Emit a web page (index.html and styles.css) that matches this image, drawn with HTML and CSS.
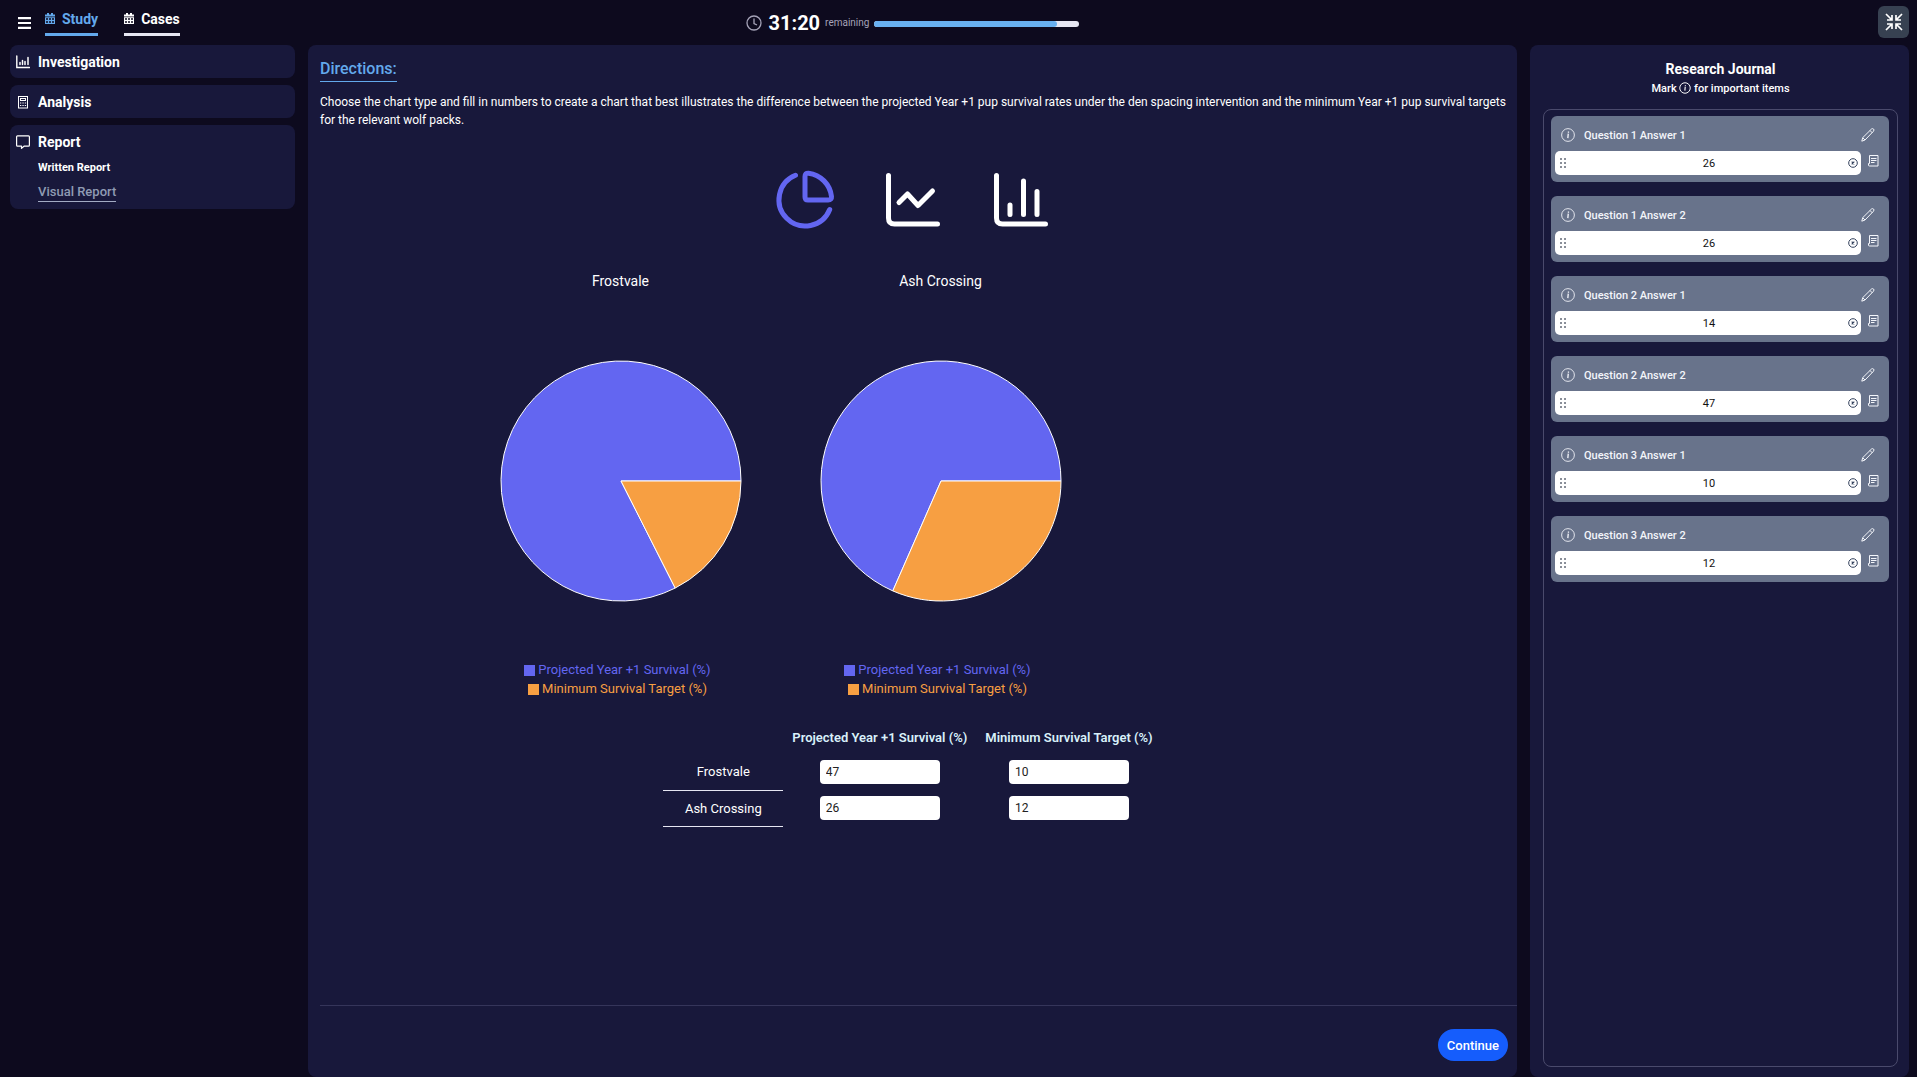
FILE: index.html
```html
<!DOCTYPE html>
<html lang="en">
<head>
  <meta charset="UTF-8">
  <meta name="viewport" content="width=device-width, initial-scale=1.0">
  <title>Visual Report</title>
  <link rel="stylesheet" href="styles.css">
</head>
<body>
  <header class="topbar">
    <nav class="tabs">
      <button class="menu-button" aria-label="Menu">
        <svg width="13" height="12" viewBox="0 0 13 12"><path d="M0 1.200h13M0 6h13M0 10.800h13" stroke="currentColor" stroke-width="2.200"/></svg>
      </button>
      <a class="tab active" href="#study">
        <svg class="tab-icon" viewBox="0 0 10 11" fill="currentColor"><path d="M2 0h2v1.500h2V0h2v1.500h2v2H0v-2h2zM0 4.200h10V11H0zM1 5.200v1.600h2V5.200zM4 5.200v1.600h2V5.200zM7 5.200v1.600h2V5.200zM1 8.200v1.600h2V8.200zM4 8.200v1.600h2V8.200zM7 8.200v1.600h2V8.200z" fill-rule="evenodd"/></svg>
        Study
      </a>
      <a class="tab" href="#cases">
        <svg class="tab-icon" viewBox="0 0 10 11" fill="currentColor"><path d="M2 0h2v1.500h2V0h2v1.500h2v2H0v-2h2zM0 4.200h10V11H0zM1 5.200v1.600h2V5.200zM4 5.200v1.600h2V5.200zM7 5.200v1.600h2V5.200zM1 8.200v1.600h2V8.200zM4 8.200v1.600h2V8.200zM7 8.200v1.600h2V8.200z" fill-rule="evenodd"/></svg>
        Cases
      </a>
    </nav>
    <div class="timer">
      <svg class="clock" viewBox="0 0 16 16" fill="none" stroke="currentColor" stroke-width="1.300"><circle cx="8" cy="8" r="7"/><path d="M8 3.500v5l3 1.500"/></svg>
      <span class="time">31:20</span>
      <span class="remaining">remaining</span>
      <div class="progress"><div class="progress-fill" style="width: 89%"></div></div>
    </div>
    <button class="shrink-button" aria-label="Exit full screen">
      <svg width="18" height="18" viewBox="0 0 18 18" fill="none" stroke="currentColor" stroke-width="1.700"><path d="M1 1l5.500 5.500M7 2v5H2M17 1l-5.500 5.500M11 2v5h5M1 17l5.500-5.500M2 11h5v5M17 17l-5.500-5.500M16 11h-5v5"/></svg>
    </button>
  </header>

  <div class="layout">
    <aside class="sidebar">
      <section class="side-card">
        <a class="side-title" href="#investigation">
          <svg class="side-icon" viewBox="0 0 14 14" fill="none" stroke="currentColor" stroke-linecap="round"><path d="M.8 1v11.500h12.600" stroke-width="1.400"/><path d="M4 9.500V7.500M6.500 9.500v-4M9 9.500V6.500M12 9.500v-7" stroke-width="1.500"/></svg>
          Investigation
        </a>
      </section>
      <section class="side-card">
        <a class="side-title" href="#analysis">
          <svg class="side-icon" viewBox="0 0 14 14" fill="none" stroke="currentColor"><rect x="2.500" y="1.500" width="9" height="11.500"/><rect x="4.500" y="3.500" width="5" height="2"/><path d="M4 8h1.300M6.400 8h1.300M8.800 8h1.300M4 10.500h1.300M6.400 10.500h1.300M8.800 10.500h1.300" stroke-width="1.200"/></svg>
          Analysis
        </a>
      </section>
      <section class="side-card">
        <a class="side-title" href="#report">
          <svg class="side-icon" viewBox="0 0 14 14" fill="none" stroke="currentColor" stroke-width="1.200" stroke-linejoin="round"><path d="M1.500.8h11q.9 0 .9.900v8.600q0 .9-.9.900H8l-2.500 2.200v-2.200h-4q-.9 0-.9-.9V1.700q0-.9.900-.9z"/></svg>
          Report
        </a>
        <div class="side-links">
          <a class="side-link" href="#written">Written Report</a>
          <a class="side-link current" href="#visual">Visual Report</a>
        </div>
      </section>
    </aside>

    <main class="content">
      <div class="content-body">
        <h1 class="directions">Directions:</h1>
        <p class="directions-text">Choose the chart type and fill in numbers to create a chart that best illustrates the difference between the projected Year +1 pup survival rates under the den spacing intervention and the minimum Year +1 pup survival targets for the relevant wolf packs.</p>

        <div class="chart-types">
          <button class="chart-type selected" aria-label="Pie chart">
            <svg viewBox="0 0 64 64"><path d="M22.500 7.300A26.300 26.300 0 1 0 56.700 41.500M32 8.500q0-3.500 3.500-3.300A26.500 26.500 0 0 1 58.500 28.500q.3 3.500-3.300 3.500H35q-3 0-3-3z"/></svg>
          </button>
          <button class="chart-type" aria-label="Line chart">
            <svg viewBox="0 0 64 64"><path d="M7.500 7.500V50q0 6 6 6H56.500M18 34.500l8.500-8.500 10.500 11.500 14.500-14.500"/></svg>
          </button>
          <button class="chart-type" aria-label="Bar chart">
            <svg viewBox="0 0 64 64"><path d="M7.500 7.500V50q0 6 6 6H56.500M21 37v9.500M34.500 13v33.500M48 23.500v23"/></svg>
          </button>
        </div>

        <div class="charts" id="charts"></div>

        <table class="data-table">
          <thead>
            <tr>
              <td></td>
              <th scope="col">Projected Year +1 Survival (%)</th>
              <th scope="col">Minimum Survival Target (%)</th>
            </tr>
          </thead>
          <tbody>
            <tr>
              <th class="row-label" scope="row">Frostvale</th>
              <td><input type="text" value="47" id="projected-0" aria-label="Frostvale projected survival"></td>
              <td><input type="text" value="10" id="target-0" aria-label="Frostvale survival target"></td>
            </tr>
            <tr>
              <th class="row-label" scope="row">Ash Crossing</th>
              <td><input type="text" value="26" id="projected-1" aria-label="Ash Crossing projected survival"></td>
              <td><input type="text" value="12" id="target-1" aria-label="Ash Crossing survival target"></td>
            </tr>
          </tbody>
        </table>
      </div>
      <footer class="content-footer">
        <button class="continue-button">Continue</button>
      </footer>
    </main>

    <aside class="journal">
      <h2>Research Journal</h2>
      <p class="journal-hint">Mark <svg width="12" height="12" viewBox="0 0 16 16" fill="none" stroke="currentColor" stroke-width="1.300"><circle cx="8" cy="8" r="7"/><path d="M8.300 6.500L7.800 11.500M8.500 4.200v1.300" stroke-width="1.500"/></svg> for important items</p>
      <div class="journal-list" id="journal-list"></div>
    </aside>
  </div>

  <script>
    const packs = ['Frostvale', 'Ash Crossing'];
    const entries = [
      { title: 'Question 1 Answer 1', value: 26 },
      { title: 'Question 1 Answer 2', value: 26 },
      { title: 'Question 2 Answer 1', value: 14 },
      { title: 'Question 2 Answer 2', value: 47 },
      { title: 'Question 3 Answer 1', value: 10 },
      { title: 'Question 3 Answer 2', value: 12 },
    ];

    // projected slice runs counter-clockwise from 3 o'clock, the target fills the rest
    function pieSlices(projected, target) {
      const r = 120;
      const angle = target / (projected + target) * 2 * Math.PI;
      const x = 121 + r * Math.cos(angle);
      const y = 121 + r * Math.sin(angle);
      const large = angle > Math.PI ? 1 : 0;
      return `
        <path class="slice-projected" d="M121 121L241 121A${r} ${r} 0 ${1 - large} 0 ${x} ${y}Z"/>
        <path class="slice-target" d="M121 121L241 121A${r} ${r} 0 ${large} 1 ${x} ${y}Z"/>
      `;
    }

    function renderCharts() {
      document.getElementById('charts').innerHTML = packs.map((name, i) => {
        const projected = Number(document.getElementById('projected-' + i).value) || 0;
        const target = Number(document.getElementById('target-' + i).value) || 0;
        return `
          <div class="chart">
            <h3>${name}</h3>
            <svg class="pie" viewBox="0 0 242 242">${projected + target ? pieSlices(projected, target) : ''}</svg>
            <ul class="legend">
              <li class="projected">Projected Year +1 Survival (%)</li>
              <li class="target">Minimum Survival Target (%)</li>
            </ul>
          </div>
        `;
      }).join('');
    }

    function renderJournal() {
      document.getElementById('journal-list').innerHTML = entries.map((e, i) => `
        <div class="entry">
          <div class="entry-head">
            <button class="icon-button" aria-label="Mark as important">
              <svg width="14" height="14" viewBox="0 0 16 16" fill="none" stroke="currentColor"><circle cx="8" cy="8" r="7.300"/><path d="M8.300 6.500L7.800 11.500M8.500 4v1.500" stroke-width="1.500"/></svg>
            </button>
            <label for="entry-${i}">${e.title}</label>
            <button class="icon-button" aria-label="Edit">
              <svg width="14" height="14" viewBox="0 0 14 14" fill="none" stroke="currentColor" stroke-linejoin="round"><path d="M.8 13.200l.9-3.500L10.500 1q1-.8 2 0t0 2.200L4 12zM9 2.500l2.400 2.400M1.700 9.700L4 12"/></svg>
            </button>
          </div>
          <div class="entry-row">
            <div class="entry-value">
              <svg class="grip" width="6" height="10" viewBox="0 0 6 10" fill="currentColor"><path d="M0 0h2v2H0zM4 0h2v2H4zM0 4h2v2H0zM4 4h2v2H4zM0 8h2v2H0zM4 8h2v2H4z"/></svg>
              <input type="text" id="entry-${i}" value="${e.value}">
              <button class="icon-button clear" aria-label="Clear">
                <svg width="10" height="10" viewBox="0 0 10 10" fill="none" stroke="currentColor"><circle cx="5" cy="5" r="4.300"/><path d="M3.700 3.700l2.600 2.600M6.300 3.700l-2.600 2.600" stroke-width="1.200"/></svg>
              </button>
            </div>
            <button class="icon-button note" aria-label="Notes">
              <svg width="11" height="12" viewBox="0 0 11 12" fill="none" stroke="currentColor"><path d="M1.500.5h8.500v10.500H1.500q-1 0-1-1V8.500h1V.5M3 3.500h5.500M3 5.500h5.500M3 7.500h3.500"/></svg>
            </button>
          </div>
        </div>
      `).join('');
    }

    document.querySelector('.data-table').addEventListener('input', renderCharts);
    window.onload = () => {
      renderCharts();
      renderJournal();
    };
  </script>
</body>
</html>
```
FILE: styles.css
```css
* {
  box-sizing: border-box;
}
body {
  margin: 0;
  height: 100vh;
  display: flex;
  flex-direction: column;
  background: #0d0a1e;
  color: #fff;
  font-family: Roboto, "Liberation Sans", sans-serif;
  font-size: 13px;
}
h1, h2, h3, p, ul {
  margin: 0;
  padding: 0;
}
a {
  color: inherit;
  text-decoration: none;
}
button {
  border: none;
  padding: 0;
  background: none;
  color: inherit;
  font-family: inherit;
  cursor: pointer;
}
input {
  font-family: inherit;
  border: none;
  min-width: 0;
}
svg {
  flex-shrink: 0;
}

/* header and page share the same columns */
.topbar, .layout {
  display: grid;
  grid-template-columns: 285px 1fr 379px;
  gap: 13px;
  padding: 0 8px 0 10px;
}
.topbar {
  height: 45px;
  flex-shrink: 0;
}
.layout {
  flex: 1;
  min-height: 0;
}
.tabs {
  display: flex;
  align-items: flex-start;
  padding: 8px 0 0 8px;
}
.menu-button {
  height: 28px;
  padding-top: 1px;
  margin-right: 14px;
}
.menu-button svg {
  display: block;
}
.tab {
  display: flex;
  align-items: center;
  gap: 7px;
  height: 28px;
  padding-bottom: 4px;
  margin-right: 26px;
  border-bottom: 3px solid #e6e6f2;
  font-size: 14px;
  font-weight: 700;
}
.tab.active {
  color: #63a9ec;
  border-color: #63a9ec;
}
.tab-icon {
  width: 10px;
  height: 11px;
}
.timer {
  display: flex;
  align-items: center;
  justify-content: center;
}
.clock {
  width: 16px;
  height: 16px;
  margin-right: 7px;
  color: #a5a3b8;
}
.time {
  margin-right: 5px;
  font-size: 20px;
  font-weight: 700;
}
.remaining {
  margin-right: 5px;
  color: #a5a3b8;
  font-size: 10px;
}
.progress {
  width: 205px;
  height: 6px;
  margin-top: 2px;
  border-radius: 3px;
  background: #e6e6f2;
}
.progress-fill {
  height: 100%;
  border-radius: 3px;
  background: #68b0f0;
}
.shrink-button {
  justify-self: end;
  display: grid;
  place-items: center;
  width: 31px;
  height: 32px;
  margin-top: 6px;
  border-radius: 6px;
  background: #374151;
}

.sidebar {
  display: flex;
  flex-direction: column;
  gap: 7px;
}
.side-card {
  padding: 0 6px;
  border-radius: 8px;
  background: #18183b;
}
.side-title {
  display: flex;
  align-items: center;
  gap: 8px;
  height: 33px;
  font-size: 14px;
  font-weight: 700;
}
.side-icon {
  width: 14px;
  height: 14px;
}
.side-links {
  display: flex;
  flex-direction: column;
  align-items: flex-start;
  gap: 7px;
  padding: 2px 0 7px 22px;
}
.side-link {
  font-size: 11px;
  font-weight: 700;
  line-height: 16px;
}
.side-link.current {
  font-size: 13px;
  font-weight: 500;
  line-height: 18px;
  color: #8f9bb3;
  border-bottom: 1px solid #a3abc4;
}

.content {
  display: flex;
  flex-direction: column;
  padding-left: 12px;
  border-radius: 8px;
  background: #18183b;
}
.content-body {
  flex: 1;
  padding: 13px 12px 0 0;
}
.directions {
  display: inline-block;
  padding-bottom: 2px;
  border-bottom: 1px solid #63a9ec;
  color: #63a9ec;
  font-size: 16px;
  font-weight: 500;
  line-height: 21px;
}
.directions-text {
  margin-right: -8px;
  padding-top: 11px;
  font-size: 12px;
  line-height: 18px;
}
.chart-types {
  display: flex;
  justify-content: center;
  gap: 44px;
  margin-top: 39px;
}
.chart-type {
  width: 64px;
  height: 64px;
}
.chart-type svg {
  display: block;
  fill: none;
  stroke: #fff;
  stroke-width: 5;
  stroke-linecap: round;
  stroke-linejoin: round;
}
.chart-type.selected svg {
  stroke: #6366f1;
}
.charts {
  display: flex;
  width: 904px;
  max-width: 100%;
  margin: 39px auto 0;
}
.chart {
  display: flex;
  flex-direction: column;
  align-items: center;
  width: 320px;
}
.chart h3 {
  font-size: 14px;
  font-weight: 400;
  line-height: 20px;
}
.pie {
  width: 242px;
  height: 242px;
  margin: 69px 0 58px;
}
.slice-projected, .slice-target {
  stroke: #fff;
  stroke-width: 1;
  stroke-linejoin: round;
}
.slice-projected {
  fill: #6366f1;
}
.slice-target {
  fill: #f79f42;
}
.legend {
  margin-right: 6px;
  list-style: none;
  text-align: center;
  line-height: 19px;
}
.legend li::before {
  content: "";
  display: inline-block;
  width: 11px;
  height: 11px;
  margin-right: 3px;
  vertical-align: -2px;
  background: currentColor;
}
.projected {
  color: #6366f1;
}
.target {
  color: #f79f42;
}
.data-table {
  margin: 23px auto 0;
  border-collapse: collapse;
  text-align: center;
}
.data-table th, .data-table td {
  padding: 0 9px;
  height: 36px;
}
.data-table thead th, .data-table thead td {
  height: 33px;
}
.data-table thead th {
  color: #d8f0fa;
  font-weight: 600;
}
.data-table .row-label {
  width: 120px;
  border-bottom: 1px solid #e6e6f2;
  font-weight: 400;
}
.data-table input {
  width: 120px;
  height: 24px;
  padding: 0 6px;
  border-radius: 4px;
  background: #fff;
  color: #222;
  font-size: 12px;
}
.content-footer {
  display: flex;
  justify-content: flex-end;
  padding: 23px 9px 16px;
  border-top: 1px solid #35355a;
}
.continue-button {
  height: 32px;
  padding: 0 9px;
  border-radius: 16px;
  background: #155dfc;
  font-size: 13px;
  font-weight: 500;
}

.journal {
  display: flex;
  flex-direction: column;
  padding: 15px 11px 10px 13px;
  border-radius: 8px;
  background: #18183b;
  text-align: center;
}
.journal h2 {
  font-size: 14px;
  font-weight: 700;
  line-height: 18px;
}
.journal-hint {
  margin: 3px 0 12px;
  font-size: 11px;
  font-weight: 500;
  line-height: 16px;
}
.journal-hint svg {
  vertical-align: -2px;
}
.journal-list {
  flex: 1;
  display: flex;
  flex-direction: column;
  gap: 14px;
  padding: 6px 8px 6px 7px;
  border: 1px solid #4a4a6c;
  border-radius: 8px;
}
.entry {
  height: 66px;
  padding: 0 4px;
  border-radius: 6px;
  background: #68738b;
}
.entry-head {
  display: flex;
  align-items: center;
  height: 35px;
  padding: 3px 10px 0 6px;
  color: #f3f5fa;
  font-size: 11px;
  font-weight: 500;
}
.entry-head label {
  flex: 1;
  padding-left: 9px;
  text-align: left;
}
.icon-button svg {
  display: block;
}
.entry-row {
  display: flex;
  gap: 7px;
}
.entry-value {
  flex: 1;
  display: flex;
  align-items: center;
  height: 24px;
  padding: 0 3px 0 5px;
  border-radius: 5px;
  background: #fff;
}
.grip {
  color: #8a8f99;
}
.entry-value input {
  flex: 1;
  padding: 0 0 0 4px;
  background: none;
  color: #111;
  font-size: 11px;
  text-align: center;
}
.clear {
  color: #33415c;
}
.note {
  height: 20px;
  margin-right: 6px;
  color: #f3f5fa;
}
```
